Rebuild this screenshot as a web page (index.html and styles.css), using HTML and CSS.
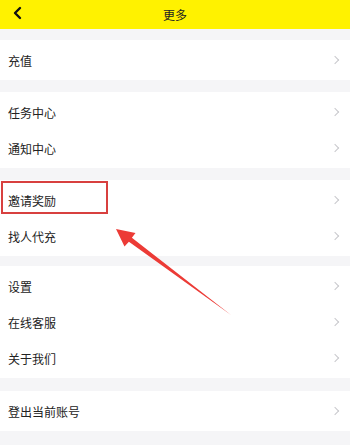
FILE: index.html
```html
<!DOCTYPE html>
<html lang="zh-CN">
<head>
  <meta charset="UTF-8">
  <meta name="viewport" content="width=device-width, initial-scale=1.0">
  <title>更多</title>
  <link rel="stylesheet" href="styles.css">
</head>
<body>

<div class="page">
  <div class="top-bar">
    <svg class="back" width="12" height="14" viewBox="0 0 12 14">
      <path d="M9 2 L4 7 L9 12" fill="none" stroke="#111" stroke-width="2.4" stroke-linecap="round" stroke-linejoin="round"/>
    </svg>
    <span class="title">更多</span>
  </div>

  <div class="group g1">
    <div class="row"><span>充值</span><i class="arrow"></i></div>
  </div>

  <div class="group">
    <div class="row"><span>任务中心</span><i class="arrow"></i></div>
    <div class="row"><span>通知中心</span><i class="arrow"></i></div>
  </div>

  <div class="group">
    <div class="row marked"><span>邀请奖励</span><i class="arrow"></i><div class="mark-box"></div></div>
    <div class="row"><span>找人代充</span><i class="arrow"></i></div>
  </div>

  <div class="group g4">
    <div class="row"><span>设置</span><i class="arrow"></i></div>
    <div class="row"><span>在线客服</span><i class="arrow"></i></div>
    <div class="row"><span>关于我们</span><i class="arrow"></i></div>
  </div>

  <div class="group g5">
    <div class="row"><span>登出当前账号</span><i class="arrow"></i></div>
  </div>

  <!-- annotation arrow pointing at the invite row -->
  <svg class="pointer" width="350" height="445" viewBox="0 0 350 445">
    <polygon points="116,229 135.5,233 131.9,237.8 231,315 128.9,241.8 124.5,246.5" fill="#ec3b36"/>
  </svg>
</div>

</body>
</html>
```

FILE: styles.css
```css
body {
  margin: 0;
  background-color: #f5f5f7;
  font-family: "Noto Sans CJK SC", "Noto Sans", sans-serif;
  color: #222;
}
.page {
  position: relative;
  width: 350px;
  height: 445px;
  overflow: hidden;
}
.top-bar {
  height: 29px;
  background-color: #fff200;
  display: flex;
  align-items: center;
  justify-content: center;
  position: relative;
}
.top-bar .back {
  position: absolute;
  left: 11px;
  top: 6px;
}
.top-bar .title {
  font-size: 12px;
  color: #222;
}
.group {
  background-color: #fff;
  padding: 2px 0;
  margin-top: 12px;
}
.group.g1 {
  margin-top: 11px;
}
.group.g4 {
  margin-top: 10px;
}
.group.g5 {
  margin-top: 13px;
}
.row {
  height: 36px;
  display: flex;
  align-items: center;
  justify-content: space-between;
  padding: 0 10px 0 8px;
  font-size: 12px;
}
.row .arrow {
  width: 5px;
  height: 5px;
  border-top: 1.2px solid #c8c8cc;
  border-right: 1.2px solid #c8c8cc;
  transform: rotate(45deg);
  margin-right: 2px;
}
.row.marked {
  position: relative;
}
.mark-box {
  position: absolute;
  left: 1px;
  top: -1px;
  width: 103px;
  height: 29px;
  border: 2.5px solid #d8403f;
}
.pointer {
  position: absolute;
  left: 0;
  top: 0;
}
```
